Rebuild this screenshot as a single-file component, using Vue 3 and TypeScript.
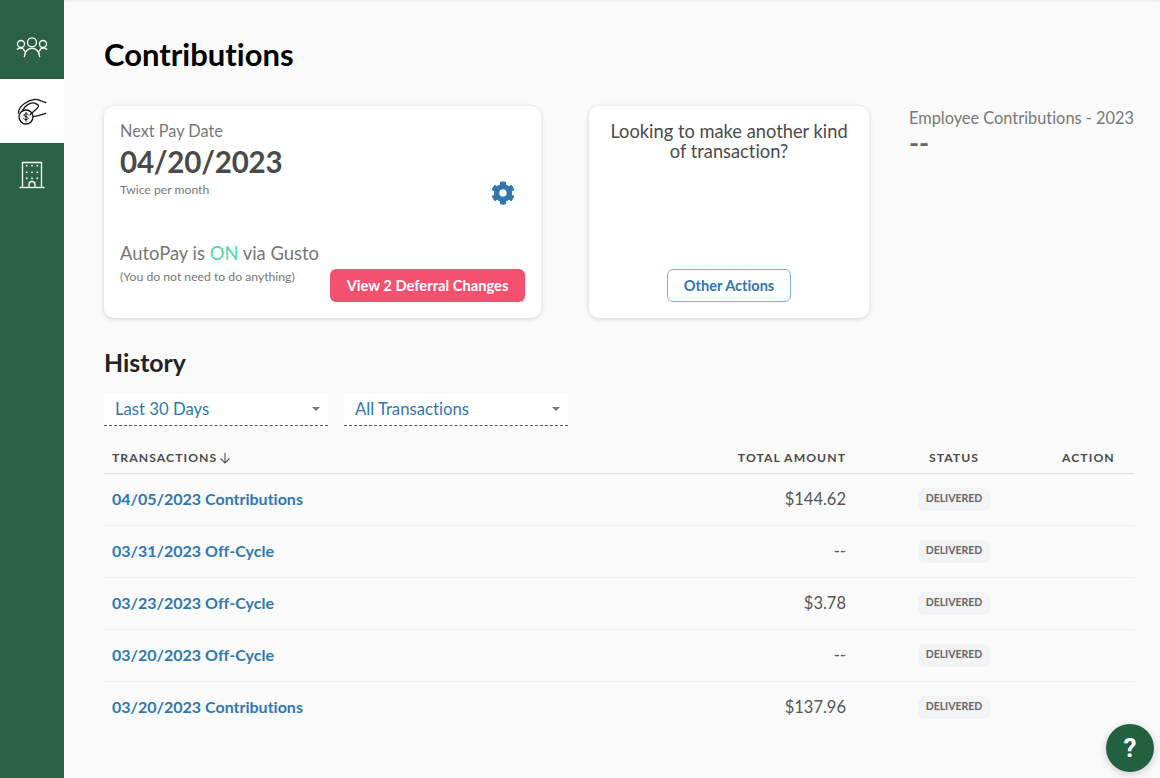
<script setup lang="ts">
type Row = { name: string; amount: string; status: string };

const rows: Row[] = [
  { name: '04/05/2023 Contributions', amount: '$144.62', status: 'DELIVERED' },
  { name: '03/31/2023 Off-Cycle', amount: '--', status: 'DELIVERED' },
  { name: '03/23/2023 Off-Cycle', amount: '$3.78', status: 'DELIVERED' },
  { name: '03/20/2023 Off-Cycle', amount: '--', status: 'DELIVERED' },
  { name: '03/20/2023 Contributions', amount: '$137.96', status: 'DELIVERED' },
];

const filters = ['Last 30 Days', 'All Transactions'];
</script>

<template>
  <div class="page">
    <nav class="sidebar">
      <a class="nav-item first">
        <svg width="32" height="22" viewBox="0 0 32 22" fill="none" stroke="#fff" stroke-width="1.300" stroke-linecap="round">
          <circle cx="16" cy="6.300" r="4.500" />
          <circle cx="5" cy="8" r="3.500" />
          <circle cx="27" cy="8" r="3.500" />
          <path d="M8.300 20.700C9 15.500 12 12.300 16 12.300s7 3.200 7.700 8.400" />
          <path d="M1.300 13.300C2.500 12.300 3.500 12.200 5 12.200c1.500 0 3 1.300 4 3.500" />
          <path d="M30.700 13.300C29.500 12.300 28.500 12.200 27 12.200c-1.500 0-3 1.300-4 3.500" />
        </svg>
      </a>
      <a class="nav-item active">
        <svg width="30" height="28" viewBox="0 0 30 28" fill="none" stroke="#111" stroke-width="1.300" stroke-linecap="round" stroke-linejoin="round">
          <circle cx="9" cy="20" r="7" />
          <path d="M1.300 16C2 11 5 8 8 6.300 11 4 15 2.600 18 2.300c2.500-.2 4 .8 6.700 1.700l4 1.700" />
          <path d="M5.700 13c1.500-2.700 3.500-4.700 5.600-5.700 2.500-1.200 5.200-1.700 6.700-1 2.500 1 4 2 3.300 3.400-.9 1.800-3.200 3.500-5 5-1.300 1-2.500 2-3.300 3.300" />
          <path d="M16.300 19.700c2-.2 3.500-.5 5-1l7.400-2.400" />
          <path d="M11.300 17.600c-.6-1-3.800-1.400-4.400.3-.5 1.900 4.600 1.400 4.300 3.500-.3 1.600-3.600 1.500-4.700.2M9 15.500v9" stroke-width="1" />
        </svg>
      </a>
      <a class="nav-item">
        <svg width="26" height="28" viewBox="0 0 26 28" fill="none" stroke="#fff" stroke-width="1.300">
          <path d="M3.500 26.500V1.500h19v25" />
          <path d="M.5 26.500h25" />
          <path d="M10 26.500v-3a3 3 0 0 1 6 0v3" />
          <g fill="#fff" stroke="none">
            <rect x="6.900" y="3.900" width="1.600" height="1.600" /><rect x="12.200" y="3.900" width="1.600" height="1.600" /><rect x="17.500" y="3.900" width="1.600" height="1.600" />
            <rect x="6.900" y="10.500" width="1.600" height="1.600" /><rect x="12.200" y="10.500" width="1.600" height="1.600" /><rect x="17.500" y="10.500" width="1.600" height="1.600" />
            <rect x="6.900" y="16.500" width="1.600" height="1.600" /><rect x="12.200" y="16.500" width="1.600" height="1.600" /><rect x="17.500" y="16.500" width="1.600" height="1.600" />
          </g>
        </svg>
      </a>
    </nav>

    <main class="content">
      <h1 class="title">Contributions</h1>

      <section class="summary">
        <div class="card pay-card">
          <div class="pay-label">Next Pay Date</div>
          <div class="pay-date">04/20/2023</div>
          <div class="pay-freq">Twice per month</div>
          <svg class="gear" width="24" height="24" viewBox="0 0 512 512" fill="#2f77b1">
            <path d="M487.400 315.700l-42.600-24.600c4.300-23.200 4.300-47 0-70.200l42.600-24.600c4.900-2.800 7.100-8.600 5.500-14-11.100-35.600-30-67.800-54.700-94.600-3.800-4.100-10-5.100-14.800-2.300L380.800 110c-17.900-15.400-38.500-27.300-60.800-35.100V25.800c0-5.600-3.900-10.500-9.400-11.700-36.700-8.200-74.300-7.800-109.200 0-5.500 1.200-9.400 6.100-9.400 11.700V75c-22.200 7.900-42.800 19.800-60.800 35.100L88.700 85.500c-4.900-2.800-11-1.900-14.800 2.300-24.700 26.700-43.600 58.900-54.700 94.600-1.700 5.400.6 11.200 5.500 14L67.300 221c-4.300 23.200-4.300 47 0 70.200l-42.600 24.600c-4.900 2.800-7.100 8.600-5.500 14 11.100 35.600 30 67.800 54.700 94.600 3.800 4.100 10 5.100 14.800 2.300l42.600-24.600c17.900 15.400 38.500 27.300 60.800 35.100v49.200c0 5.600 3.900 10.500 9.400 11.700 36.700 8.200 74.300 7.800 109.200 0 5.500-1.200 9.400-6.100 9.400-11.700v-49.200c22.200-7.900 42.800-19.800 60.800-35.100l42.600 24.600c4.900 2.800 11 1.900 14.800-2.300 24.700-26.700 43.600-58.900 54.700-94.600 1.500-5.500-.7-11.300-5.600-14.100zM256 336c-44.100 0-80-35.900-80-80s35.900-80 80-80 80 35.900 80 80-35.900 80-80 80z" />
          </svg>
          <div class="pay-bottom">
            <div>
              <div class="autopay">AutoPay is <span class="on">ON</span> via Gusto</div>
              <div class="autopay-note">(You do not need to do anything)</div>
            </div>
            <button class="btn-primary">View 2 Deferral Changes</button>
          </div>
        </div>

        <div class="card action-card">
          <p class="action-text">Looking to make another kind of transaction?</p>
          <button class="btn-outline">Other Actions</button>
        </div>

        <div class="stat">
          <div class="stat-label">Employee Contributions - 2023</div>
          <div class="stat-value">--</div>
        </div>
      </section>

      <h2 class="history">History</h2>

      <div class="filters">
        <div v-for="f in filters" :key="f" class="filter">
          <span>{{ f }}</span>
          <i class="caret"></i>
        </div>
      </div>

      <div class="table">
        <div class="row head">
          <div class="sort">
            TRANSACTIONS
            <svg width="12" height="12" viewBox="0 0 12 12" fill="none" stroke="#555" stroke-width="1.100">
              <path d="M6 1v10M1.500 6.500 6 11l4.500-4.500" />
            </svg>
          </div>
          <div class="right">TOTAL AMOUNT</div>
          <div class="center">STATUS</div>
          <div>ACTION</div>
        </div>
        <div v-for="r in rows" :key="r.name" class="row item">
          <a class="tx-link">{{ r.name }}</a>
          <div class="right amount">{{ r.amount }}</div>
          <div class="center"><span class="pill">{{ r.status }}</span></div>
          <div></div>
        </div>
      </div>
    </main>

    <button class="help">?</button>
  </div>
</template>

<style>
html, body {
  margin: 0;
  background: #fafafa;
}
</style>

<style scoped>
.page {
  display: flex;
  height: 778px;
  overflow: hidden;
  position: relative;
  background: #fafafa;
  font-family: Lato, "Noto Sans", sans-serif;
  font-variant-ligatures: none;
  color: #4a4a4a;
}

.sidebar {
  width: 64px;
  flex: none;
  background: #2b6245;
  display: flex;
  flex-direction: column;
}

.nav-item {
  height: 64px;
  display: flex;
  align-items: center;
  justify-content: center;
}

.nav-item.first {
  height: 79px;
  padding-top: 15px;
  box-sizing: border-box;
}

.nav-item.active {
  background: #fff;
}

.content {
  flex: 1;
  padding: 0 26px 0 40px;
  box-shadow: inset 0 3px 3px -2px rgba(0, 0, 0, 0.08);
}

.title {
  margin: 0;
  padding-top: 36px;
  height: 106px;
  box-sizing: border-box;
  font-size: 31px;
  line-height: 36px;
  font-weight: 700;
  color: #000;
}

.summary {
  display: flex;
  align-items: flex-start;
}

.card {
  height: 212px;
  box-sizing: border-box;
  background: #fff;
  border-radius: 10px;
  box-shadow: 0 1px 5px rgba(0, 0, 0, 0.16);
}

.pay-card {
  width: 437px;
  padding: 15px 16px 16px;
  position: relative;
  display: flex;
  flex-direction: column;
}

.pay-label {
  font-size: 16.300px;
  line-height: 20px;
  color: #777;
}

.pay-date {
  font-size: 29.500px;
  line-height: 42px;
  font-weight: 700;
  letter-spacing: -0.2px;
  color: #4a4a4a;
}

.pay-freq {
  font-size: 12.200px;
  line-height: 14px;
  color: #777;
}

.gear {
  position: absolute;
  right: 26px;
  top: 75px;
}

.pay-bottom {
  display: flex;
  justify-content: space-between;
  align-items: flex-end;
  margin-top: auto;
}

.autopay {
  font-size: 18.400px;
  line-height: 24px;
  color: #777;
}

.on {
  color: #4ddba8;
}

.autopay-note {
  font-size: 12.200px;
  line-height: 24px;
  color: #777;
  padding-bottom: 13px;
}

.btn-primary {
  width: 195px;
  height: 33px;
  border: 0;
  padding: 0 0 1px;
  border-radius: 6px;
  background: #f45171;
  color: #fff;
  font-family: inherit;
  font-variant-ligatures: none;
  font-size: 14.700px;
  font-weight: 700;
}

.action-card {
  width: 280px;
  margin-left: 48px;
  padding: 15px 16px 16px;
  display: flex;
  flex-direction: column;
  align-items: center;
  justify-content: space-between;
}

.action-text {
  margin: 0;
  font-size: 18.300px;
  line-height: 20px;
  text-align: center;
  color: #4a4a4a;
}

.btn-outline {
  width: 124px;
  height: 33px;
  padding: 0 0 1px;
  background: #fff;
  border: 1px solid #7fb3d3;
  border-radius: 6px;
  color: #2f77b1;
  font-family: inherit;
  font-variant-ligatures: none;
  font-size: 14.600px;
  font-weight: 700;
}

.stat {
  margin-left: 40px;
  white-space: nowrap;
}

.stat-label {
  font-size: 16.350px;
  line-height: 24px;
  color: #777;
}

.stat-value {
  font-size: 27px;
  line-height: 26px;
  font-weight: 700;
  color: #666;
}

.history {
  margin: 0;
  padding-top: 28px;
  font-size: 24.800px;
  line-height: 34px;
  font-weight: 700;
  color: #222;
}

.filters {
  display: flex;
  gap: 16px;
  margin-top: 13px;
}

.filter {
  width: 224px;
  height: 33px;
  box-sizing: border-box;
  padding: 0 8px 1px 11px;
  display: flex;
  align-items: center;
  justify-content: space-between;
  background: #fff;
  border-bottom: 1px dashed #555;
  color: #2f77b1;
  font-size: 16.700px;
}

.caret {
  width: 0;
  height: 0;
  border-left: 4px solid transparent;
  border-right: 4px solid transparent;
  border-top: 4px solid #777;
}

.table {
  margin-top: 16px;
}

.row {
  display: grid;
  grid-template-columns: 1fr 160px 216px 64px;
  align-items: center;
  padding: 0 8px;
  box-sizing: border-box;
}

.head {
  height: 32px;
  border-bottom: 1px solid #e0e0e0;
  font-size: 12.200px;
  font-weight: 700;
  letter-spacing: 1.050px;
  color: #4a4a4a;
}

.sort {
  display: flex;
  align-items: center;
  gap: 2px;
}

.item {
  height: 52px;
  padding-bottom: 2px;
  border-bottom: 1px solid #efefef;
}

.item:last-child {
  border-bottom-color: transparent;
}

.right {
  text-align: right;
}

.center {
  text-align: center;
}

.tx-link {
  color: #2f77b1;
  font-size: 16px;
  font-weight: 700;
}

.amount {
  font-size: 16.500px;
  color: #555;
}

.pill {
  display: inline-block;
  width: 72px;
  height: 23px;
  line-height: 21px;
  border-radius: 7px;
  background: #f2f3f5;
  color: #666;
  font-size: 10.500px;
  font-weight: 700;
}

.help {
  position: absolute;
  right: 6px;
  bottom: 6px;
  width: 48px;
  height: 48px;
  border: 0;
  padding: 0;
  border-radius: 50%;
  background: #22613f;
  color: #fff;
  font-family: Roboto, sans-serif;
  font-size: 26px;
  font-weight: 700;
  box-shadow: 0 2px 8px rgba(0, 0, 0, 0.2);
}
</style>
